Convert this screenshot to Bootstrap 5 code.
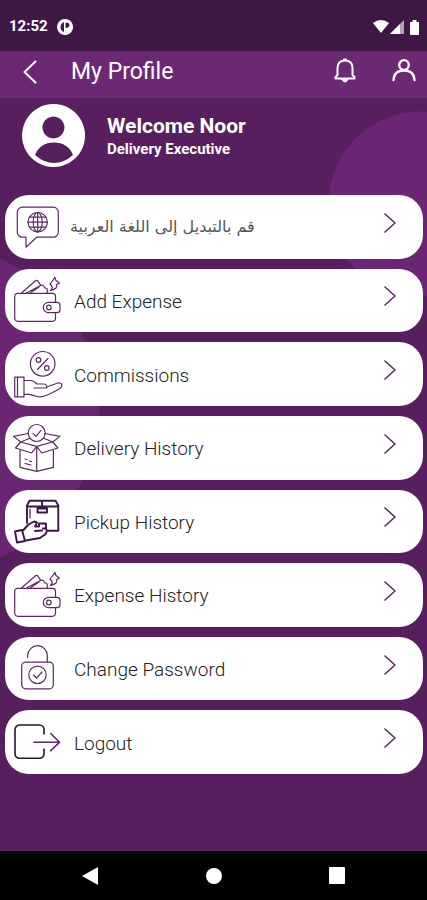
<!DOCTYPE html>
<html lang="en">
<head>
<meta charset="utf-8">
<meta name="viewport" content="width=device-width, initial-scale=1">
<title>My Profile</title>
<link href="https://cdn.jsdelivr.net/npm/bootstrap@5.3.0/dist/css/bootstrap.min.css" rel="stylesheet">
<style>
  body {
    font-family: Roboto, "Noto Sans", sans-serif;
    color: #fff;
    background:
      radial-gradient(circle at calc(100% - 6px) 204px, #6a2672 92px, transparent 93px),
      radial-gradient(circle at -62px 408px, #6a2672 161px, transparent 162px),
      #581f5e;
  }
  svg { display: block; fill: none; stroke: currentColor; stroke-linecap: round; stroke-linejoin: round; overflow: visible; }
  .status-bar { background: #3e1744; height: 51px; padding: 2px 7px 0 9px; font-size: 15px; }
  .status-bar svg, .system-nav svg { fill: currentColor; stroke: none; }
  .app-bar { background: #6c2973; height: 47px; padding: 0 11px 6px 23px; }
  .app-bar h1 { font-size: 23px; line-height: 28px; padding-left: 10px; }
  .icon-button { color: inherit; background: none; border: 0; padding: 0; }
  .profile { padding: 6px 22px 0; gap: 22px; height: 97px; }
  .profile h2 { font-size: 21px; line-height: 28px; }
  .profile p { font-size: 15px; line-height: 19px; }
  .menu { grid-auto-rows: 1fr; gap: 10px; padding: 0 4px 77px 5px; }
  .menu-item { min-height: 56px; border-radius: 24px; background: #fff; color: #333; padding: 0 27px 0 8px; font-size: 19px; line-height: 24px; font-weight: 300; }
  .menu-item svg { color: #5b2a63; stroke-width: 1.2; }
  .menu-item .go { margin-bottom: 8px; stroke-width: 1.6; }
  .menu-label { padding: 3px 0 0 13px; color: #222; }
  .arabic { font-family: "DejaVu Sans", sans-serif; font-size: 16px; font-weight: 400; color: #555; padding: 0 0 0 9px; }
  .system-nav { background: #000; height: 49px; padding: 0 28px; }
</style>
</head>
<body class="min-vh-100 d-flex flex-column">
<svg class="d-none" aria-hidden="true">
  <symbol id="wallet" viewBox="0 0 48 48">
    <path d="M5 17.300H39.500a3 3 0 0 1 3 3V26.300M42.500 36.700v5.600a3 3 0 0 1-3 3H4.700a3 3 0 0 1-3-3V20.300a3 3 0 0 1 3-3M30.300 31.500a5.200 5.200 0 0 1 5.200-5.200H44a3 3 0 0 1 3 3v4.400a3 3 0 0 1-3 3h-8.500a5.200 5.200 0 0 1-5.200-5.200z"/>
    <circle cx="35.800" cy="31.500" r="2.300"/>
    <path d="M8.500 17 22.500 4.800q1.500-1 2.500.3l2.800 4.400M13.500 17 28 9.300q2-.8 2.800 1l1 1.700h1q1.500.3 1.500 2V17M26 11l-8.500 5.800M37.500 14.500q2.500-2 1.300-4.500l-1.800-2 2-2.500L42 1.300l.8 3 3.700 3-3 1.200q2 4-6 6z"/>
  </symbol>
  <symbol id="chevron" viewBox="0 0 12 20"><path d="M1 1l10 9-10 9"/></symbol>
</svg>

<header>
  <div class="status-bar d-flex align-items-center fw-bold">
    <span>12:52</span>
    <svg class="ms-2 me-auto" width="18" height="16" viewBox="2 0 18 16" aria-hidden="true"><path fill-rule="evenodd" d="M11 0a8 8 0 1 0 .1 0zM10 3v10Q6.500 11.500 6.500 8T10 3zM11.500 3.500q4 0 4 2.700t-4 2.800z"/></svg>
    <svg width="47" height="16" viewBox="0 0 47 16" aria-hidden="true">
      <path d="M0 4Q8 -2 16 4L8 14z"/><path d="M17 15 31 1v14z" opacity=".6"/><path d="M17 15 27 5v10zM37 3h2.500V1h4v2H46v12q0 1-1 1h-7q-1 0-1-1z"/>
    </svg>
  </div>
  <nav class="app-bar d-flex align-items-center" aria-label="Profile">
    <button class="icon-button" type="button" aria-label="Back"><svg width="14" height="24" viewBox="0 0 14 24" stroke-width="2"><path d="M12.500 1.500 1.500 12l11 10.500"/></svg></button>
    <h1 class="fw-normal mb-0 ms-4 me-auto">My Profile</h1>
    <button class="icon-button me-4" type="button" aria-label="Notifications"><svg class="me-2 mb-1" width="22" height="26" viewBox="0 0 22 26" stroke-width="2"><path d="M1.500 21.500v-1.500l2-2V11Q3.500 3.500 11 3.500T18.500 11v7l2 2v1.500zM10 2.500h2"/><path fill="currentColor" d="M8 22.500h6Q13 25 11 25t-3-2.500z" stroke-width="1"/></svg></button>
    <button class="icon-button ms-1" type="button" aria-label="Account"><svg class="mb-1" width="24" height="24" viewBox="0 0 24 24" stroke-width="2.300"><circle cx="12" cy="7" r="4.800"/><path d="M1.500 22Q2 12.500 12 12.500T22.500 22"/></svg></button>
  </nav>
</header>

<main class="d-flex flex-column flex-grow-1">
  <section class="profile d-flex align-items-start">
    <svg width="63" height="63" viewBox="0 0 63 63" aria-hidden="true"><path fill="#fff" stroke="none" fill-rule="evenodd" d="M31.500 0a31.500 31.500 0 1 0 .1 0zM31.500 12.500a11 11 0 1 1-.1 0zM13 51Q18 38.500 32 38.500T51 51Q42 59 32 59T13 51z"/></svg>
    <div class="pt-2"><h2 class="fw-bold mb-0">Welcome Noor</h2><p class="fw-bold mb-0">Delivery Executive</p></div>
  </section>

  <nav class="menu d-grid flex-grow-1" aria-label="Menu">
    <a class="menu-item d-flex align-items-center text-decoration-none" href="#language">
      <svg width="48" height="48" viewBox="0 0 48 48" stroke-width="1.400"><path d="M9.300 4.200h31a5 5 0 0 1 5 5v20a5 5 0 0 1-5 5H23.700L13 44.200v-10H9.300a5 5 0 0 1-5-5v-20a5 5 0 0 1 5-5z"/><circle cx="24.700" cy="19.200" r="9.700"/><ellipse cx="24.700" cy="19.200" rx="4.500" ry="9.700"/><path d="M24.700 9.500v19.400M15 19.200h19.400M16.500 14.200h16.400M16.500 24.200h16.400"/></svg>
      <span class="menu-label arabic me-auto" lang="ar" dir="rtl">قم بالتبديل إلى اللغة العربية</span>
      <svg class="go" width="12" height="20"><use href="#chevron"/></svg>
    </a>
    <a class="menu-item d-flex align-items-center text-decoration-none" href="#add-expense">
      <svg width="48" height="48"><use href="#wallet"/></svg>
      <span class="menu-label me-auto">Add Expense</span>
      <svg class="go" width="12" height="20"><use href="#chevron"/></svg>
    </a>
    <a class="menu-item d-flex align-items-center text-decoration-none" href="#commissions">
      <svg width="48" height="48" viewBox="0 0 48 48"><circle cx="29.700" cy="13.800" r="12.300"/><path d="M35 8.500 24.500 19.500"/><circle cx="25.500" cy="10" r="2.300"/><circle cx="33.800" cy="18" r="2.300"/><path d="M1.700 27.200H11v19.600H1.700zM4.500 27.500v19M11 30.500h6q4 0 7 3.500h7q3 .5 2.700 4H21M33.700 37l11-4q4-.6 4.200 2.200Q49 37 45.500 39.500L36 44.300Q28 48 24 46.500T16 44.300h-5"/></svg>
      <span class="menu-label me-auto">Commissions</span>
      <svg class="go" width="12" height="20"><use href="#chevron"/></svg>
    </a>
    <a class="menu-item d-flex align-items-center text-decoration-none" href="#delivery-history">
      <svg width="48" height="48" viewBox="0 0 48 48"><circle cx="23.700" cy="9" r="8.500"/><path d="M20 9.300l3 3 5-6M15.300 9.500.5 12.400 7.700 18l9-3.700M32.100 9.500l14.800 2.900-7.200 5.600-9-3.700M7.700 18 2.500 24l16.200 5 5-6.600zM39.700 18l5.200 6-16.200 5-5-6.600zM7 26v17.400l16.700 4 16.700-4V26M23.700 23v24.400M12 35l2 .5M12 39.500l6 1.500M16.500 37l2 .5"/></svg>
      <span class="menu-label me-auto">Delivery History</span>
      <svg class="go" width="12" height="20"><use href="#chevron"/></svg>
    </a>
    <a class="menu-item d-flex align-items-center text-decoration-none" href="#pickup-history">
      <svg width="48" height="48" viewBox="0 0 48 48"><g stroke="#3a1746" stroke-width="1.900"><path d="M14 26V8.500l2.500-4.800h26l2.800 4.800v25.200H35M14 9.500h31M29 4v7M24.500 11.500h9.500v4h-9.500z"/><path d="M2 34.500l7-1.500 3 11-8 1.500zM9.500 34l6-6.500 5.500-3 3 1-2 4h4v-3h7v5h-3M33 31.500q2 3-1 6L27 41l-6 1-8 1.500M22 34l7-.5"/><path d="M17 12v9" stroke-width="1.200"/></g></svg>
      <span class="menu-label me-auto">Pickup History</span>
      <svg class="go" width="12" height="20"><use href="#chevron"/></svg>
    </a>
    <a class="menu-item d-flex align-items-center text-decoration-none" href="#expense-history">
      <svg width="48" height="48"><use href="#wallet"/></svg>
      <span class="menu-label me-auto">Expense History</span>
      <svg class="go" width="12" height="20"><use href="#chevron"/></svg>
    </a>
    <a class="menu-item d-flex align-items-center text-decoration-none" href="#change-password">
      <svg width="48" height="48" viewBox="0 0 48 48"><rect x="8.700" y="17.100" width="31.600" height="26.700" rx="4"/><circle cx="24.500" cy="29.800" r="8.700"/><path d="M20.500 30l3 3 5.500-6M14.700 12.500V10.500a9.800 9.800 0 0 1 19.600 0V17"/></svg>
      <span class="menu-label me-auto">Change Password</span>
      <svg class="go" width="12" height="20"><use href="#chevron"/></svg>
    </a>
    <a class="menu-item d-flex align-items-center text-decoration-none" href="#logout">
      <svg width="48" height="48" viewBox="0 0 48 48"><path stroke="#25152e" stroke-width="1.600" d="M31 16V11.500a4.500 4.500 0 0 0-4.500-4.500H6.500a4.500 4.500 0 0 0-4.500 4.500v24.300a4.500 4.500 0 0 0 4.500 4.500h20a4.500 4.500 0 0 0 4.500-4.500V31"/><path stroke-width="1.600" d="M21 24.300h25.500M37.700 15.500l8.800 8.800-8.800 8.300"/></svg>
      <span class="menu-label me-auto">Logout</span>
      <svg class="go" width="12" height="20"><use href="#chevron"/></svg>
    </a>
  </nav>
</main>

<footer class="system-nav d-flex align-items-center">
  <button class="icon-button flex-fill d-flex justify-content-center" type="button" aria-label="System back"><svg width="16" height="18" viewBox="0 0 16 18"><path d="M0 9 16 0v18z"/></svg></button>
  <button class="icon-button flex-fill d-flex justify-content-center" type="button" aria-label="Home"><svg width="16" height="16" viewBox="0 0 16 16"><circle cx="8" cy="8" r="8"/></svg></button>
  <button class="icon-button flex-fill d-flex justify-content-center" type="button" aria-label="Recent apps"><svg width="16" height="17" viewBox="0 0 16 17"><rect width="16" height="17" rx="1"/></svg></button>
</footer>
<script src="https://cdn.jsdelivr.net/npm/bootstrap@5.3.0/dist/js/bootstrap.bundle.min.js"></script>
</body>
</html>
